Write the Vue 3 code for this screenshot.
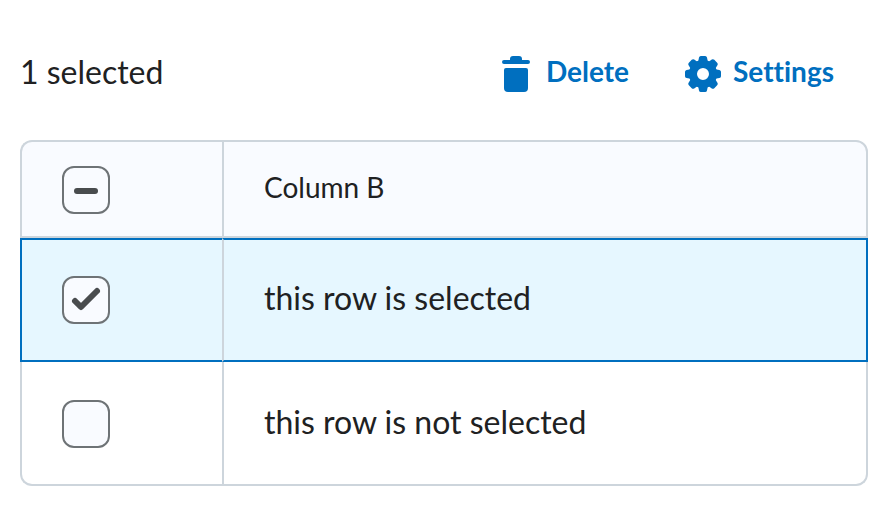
<script setup>
import { computed, ref } from 'vue'

const toothAngles = [0, 45, 90, 135, 180, 225, 270, 315]

const rows = ref([
  { id: 1, text: 'this row is selected', selected: true },
  { id: 2, text: 'this row is not selected', selected: false },
])

const selectedCount = computed(() => rows.value.filter((row) => row.selected).length)
const allSelected = computed(() => rows.value.length > 0 && selectedCount.value === rows.value.length)
const someSelected = computed(() => selectedCount.value > 0 && !allSelected.value)

function toggleAll() {
  const next = !allSelected.value
  rows.value.forEach((row) => { row.selected = next })
}

function deleteSelected() {
  rows.value = rows.value.filter((row) => !row.selected)
}
</script>

<template>
  <main class="page">
    <header class="controls">
      <span class="count">{{ selectedCount }} selected</span>
      <div class="actions">
        <button type="button" class="action" @click="deleteSelected">
          <svg class="icon" viewBox="0 0 36 36" aria-hidden="true">
            <path d="M12 4V3a3 3 0 0 1 3-3h6a3 3 0 0 1 3 3v1h6a2 2 0 0 1 0 4H6a2 2 0 0 1 0-4z" />
            <path d="M8 12h20a2 2 0 0 1 2 2v18a4 4 0 0 1-4 4H10a4 4 0 0 1-4-4V14a2 2 0 0 1 2-2z" />
          </svg>
          <span>Delete</span>
        </button>
        <button type="button" class="action">
          <svg class="icon" viewBox="0 0 36 36" aria-hidden="true">
            <path fill-rule="evenodd" d="M18 4a14 14 0 1 0 0 28 14 14 0 0 0 0-28zM18 12a6 6 0 1 1 0 12 6 6 0 0 1 0-12z" />
            <path
              v-for="angle in toothAngles"
              :key="angle"
              :transform="`rotate(${angle} 18 18)`"
              d="M16 0h4a2 2 0 0 1 2 1.600l.6 2.800L24 7H12l1.400-2.600.6-2.800A2 2 0 0 1 16 0z"
            />
          </svg>
          <span>Settings</span>
        </button>
      </div>
    </header>

    <table class="grid">
      <thead>
        <tr>
          <th class="select" scope="col">
            <label class="check">
              <input
                type="checkbox"
                aria-label="Select all rows"
                :checked="allSelected"
                :indeterminate.prop="someSelected"
                @change="toggleAll"
              >
              <svg v-if="someSelected" viewBox="0 0 48 48" aria-hidden="true">
                <path d="M15 25h18" />
              </svg>
              <svg v-else-if="allSelected" viewBox="0 0 48 48" aria-hidden="true">
                <path d="M13 25l6 6 16-16" />
              </svg>
            </label>
          </th>
          <th scope="col">Column B</th>
        </tr>
      </thead>
      <tbody>
        <tr v-for="row in rows" :key="row.id" :class="{ selected: row.selected }">
          <td class="select">
            <label class="check">
              <input v-model="row.selected" type="checkbox" :aria-label="'Select: ' + row.text">
              <svg v-if="row.selected" viewBox="0 0 48 48" aria-hidden="true">
                <path d="M13 25l6 6 16-16" />
              </svg>
            </label>
          </td>
          <td>{{ row.text }}</td>
        </tr>
      </tbody>
    </table>
  </main>
</template>

<style>
body {
  background: #ffffff;
}
</style>

<style scoped>
.page {
  padding: 48px 20px 20px;
  color: #202122;
  font-family: Lato, sans-serif;
  font-size: 32px;
  font-variant-ligatures: none;
  line-height: 48px;
}

.controls {
  display: flex;
  align-items: center;
  justify-content: space-between;
  padding-right: 34px;
  margin-bottom: 44px;
}

.actions {
  display: flex;
  gap: 56px;
}

.action {
  display: flex;
  align-items: flex-start;
  gap: 12px;
  height: 48px;
  padding: 0;
  border: 0;
  background: none;
  color: #006fbf;
  font-family: inherit;
  font-size: 28px;
  font-variant-ligatures: none;
  font-weight: 700;
  line-height: 46px;
  cursor: pointer;
}

.icon {
  width: 36px;
  height: 36px;
  margin-top: 8px;
  fill: currentColor;
}

.grid {
  width: 100%;
  table-layout: fixed;
  border-collapse: separate;
  border-spacing: 0;
}

th,
td {
  padding: 0 40px;
  border: 0 solid #cdd5dc;
  border-bottom-width: 2px;
  border-left-width: 2px;
  text-align: left;
  vertical-align: top;
  font-weight: 400;
  line-height: 44px;
}

th:last-child,
td:last-child {
  border-right-width: 2px;
}

th {
  padding-top: 24px;
  padding-bottom: 22px;
  border-top-width: 2px;
  background: #f9fbff;
  font-size: 28px;
  line-height: 42px;
}

td {
  padding-top: 38px;
  padding-bottom: 36px;
}

.select {
  width: 120px;
}

th:first-child {
  border-top-left-radius: 12px;
}

th:last-child {
  border-top-right-radius: 12px;
}

tr:last-child td:first-child {
  border-bottom-left-radius: 12px;
}

tr:last-child td:last-child {
  border-bottom-right-radius: 12px;
}

.selected td {
  padding-top: 36px;
  border-top-width: 2px;
  border-top-color: #006fbf;
  border-bottom-color: #006fbf;
  background: #e6f7ff;
}

.selected td:first-child {
  border-left-color: #006fbf;
}

.selected td:last-child {
  border-right-color: #006fbf;
}

.check {
  display: grid;
  width: 48px;
  height: 48px;
}

.check > * {
  grid-area: 1 / 1;
  width: 48px;
  height: 48px;
}

.check input {
  box-sizing: border-box;
  margin: 0;
  appearance: none;
  border: 2px solid #6e7376;
  border-radius: 12px;
  background: #f9fbff;
}

.check svg {
  z-index: 1;
  fill: none;
  stroke: #494c4e;
  stroke-width: 6px;
  stroke-linecap: round;
  stroke-linejoin: round;
  pointer-events: none;
}
</style>
